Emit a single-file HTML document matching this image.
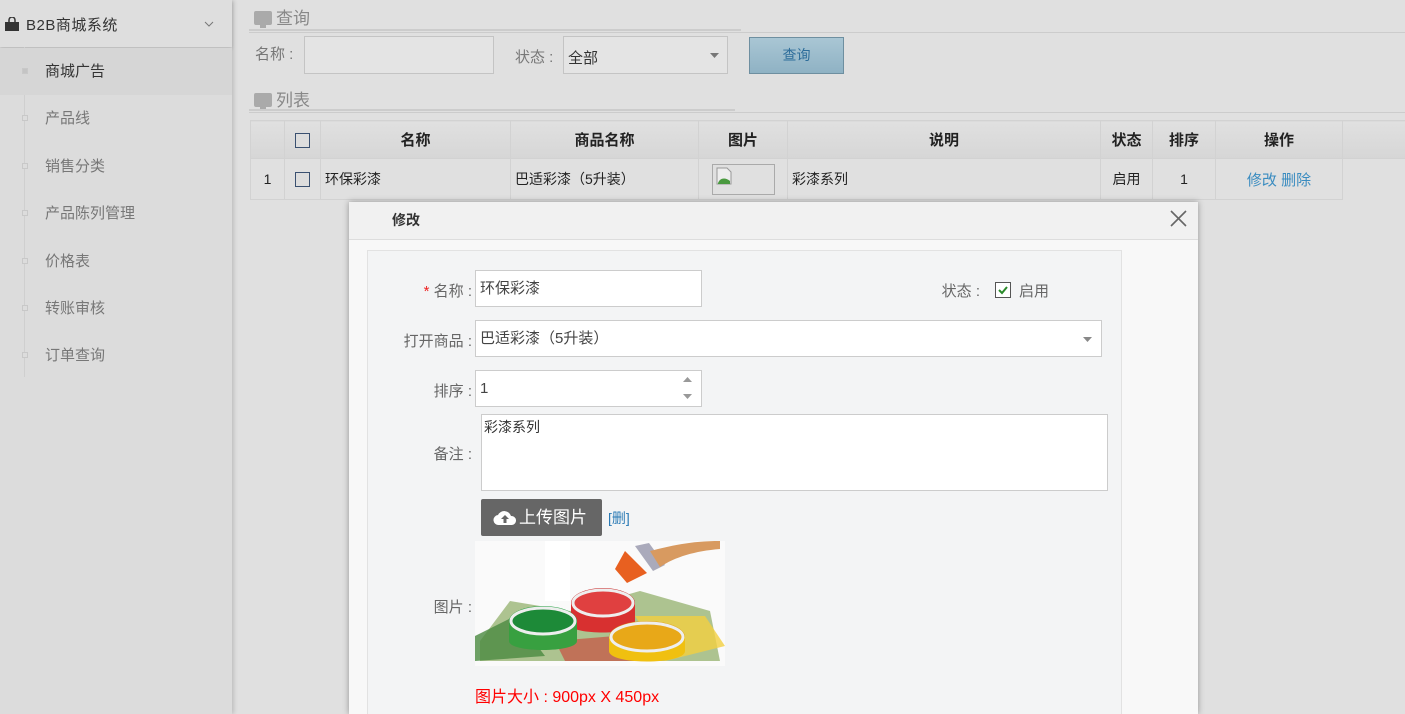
<!DOCTYPE html>
<html><head><meta charset="utf-8"><style>
*{box-sizing:border-box;margin:0;padding:0}
html{width:1405px;height:714px;overflow:hidden}
body{width:1405px;height:714px;overflow:hidden;background:#e0e0e0;font-family:"Liberation Sans","Noto Sans CJK SC",sans-serif;font-size:15px;color:#444;position:relative}
.abs{position:absolute}
#side{left:0;top:0;width:232px;height:714px;background:#dcdcdc;box-shadow:2px 0 4px rgba(0,0,0,.15)}
#side .hd{height:47px;background:#dedede;box-shadow:0 2px 3px rgba(0,0,0,.15);position:relative;font-size:15px;color:#333}
.item{position:absolute;left:0;width:232px;height:47px;line-height:47px;padding-left:45px;color:#777;font-size:15px}
.item.act{background:#d6d6d6;color:#333}
.dot{position:absolute;left:22px;top:20px;width:6px;height:6px;border:1px solid #c8c8c8;background:#dcdcdc}
.act .dot{background:#c4c4c4}
.mon{display:inline-block;width:18px;height:14px;background:#aaa;border-radius:2px;position:relative;vertical-align:-1px;margin-right:4px}
.mon:after{content:"";position:absolute;left:6px;top:14px;width:6px;height:3px;background:#aaa}
.sec{font-size:17px;color:#888}
.box{background:#e4e4e4;border:1px solid #c4c4c4}
table{border-collapse:collapse;position:absolute;left:250px;top:120px;table-layout:fixed;width:1155px}
td{border:1px solid #d2d2d2;text-align:center;font-size:14px;color:#222;overflow:hidden;white-space:nowrap}
tr.h td{height:38px;background:linear-gradient(#e0e0e0,#d6d6d6);font-weight:bold;font-size:15px}
tr.r td{height:41px;background:#e0e0e0}
.cb{display:inline-block;width:15px;height:15px;border:1px solid #3a5070;background:#ddd;vertical-align:middle}
.lab{position:absolute;text-align:right;color:#666;font-size:15px}
.in{position:absolute;background:#fff;border:1px solid #ccc;font-size:15px;color:#444;padding-left:4px}
</style></head><body>
<div id="side" class="abs">
 <div class="hd">
  <svg class="abs" style="left:4px;top:17px" width="16" height="14" viewBox="0 0 16 14"><path d="M5 5V3a3 3 0 0 1 6 0v2" stroke="#333" stroke-width="1.5" fill="none"/><rect x="1" y="5" width="14" height="9" fill="#333"/></svg>
  <span class="abs" style="left:26px;top:14px;letter-spacing:.5px">B2B商城系统</span>
  <svg class="abs" style="left:204px;top:21px" width="10" height="6"><path d="M1 1l4 4 4-4" stroke="#777" fill="none"/></svg>
 </div>
 <div class="abs" style="left:24px;top:47px;width:1px;height:330px;background:#cfcfcf"></div>
 <div class="item act" style="top:48px"><span class="dot"></span>商城广告</div>
 <div class="item" style="top:95px"><span class="dot"></span>产品线</div>
 <div class="item" style="top:143px"><span class="dot"></span>销售分类</div>
 <div class="item" style="top:190px"><span class="dot"></span>产品陈列管理</div>
 <div class="item" style="top:238px"><span class="dot"></span>价格表</div>
 <div class="item" style="top:285px"><span class="dot"></span>转账审核</div>
 <div class="item" style="top:332px"><span class="dot"></span>订单查询</div>
</div>
<div class="abs sec" style="left:254px;top:4px"><span class="mon"></span>查询</div>
<div class="abs" style="left:249px;top:29px;width:492px;height:2px;background:#ccc"></div>
<div class="abs" style="left:249px;top:32px;width:1156px;height:1px;background:#ccc"></div>
<div class="abs" style="left:255px;top:43px;color:#777;font-size:15px">名称 :</div>
<div class="abs box" style="left:304px;top:36px;width:190px;height:38px"></div>
<div class="abs" style="left:515px;top:46px;color:#777;font-size:15px">状态 :</div>
<div class="abs box" style="left:563px;top:36px;width:165px;height:38px;font-size:15px;padding:10px 4px;color:#333">全部<svg class="abs" style="left:146px;top:16px" width="9" height="5"><path d="M0 0h9L4.5 5z" fill="#777"/></svg></div>
<div class="abs" style="left:749px;top:37px;width:95px;height:37px;background:linear-gradient(#a9c6d4,#8fb2c4);border:1px solid #6e8fa0;color:#2d6d9a;font-size:14px;text-align:center;line-height:35px">查询</div>
<div class="abs sec" style="left:254px;top:86px"><span class="mon"></span>列表</div>
<div class="abs" style="left:249px;top:109px;width:486px;height:2px;background:#ccc"></div>
<div class="abs" style="left:249px;top:112px;width:1156px;height:1px;background:#ccc"></div>
<table>
<colgroup><col style="width:34px"><col style="width:36px"><col style="width:190px"><col style="width:188px"><col style="width:89px"><col style="width:313px"><col style="width:52px"><col style="width:63px"><col style="width:127px"><col style="width:63px"></colgroup>
<tr class="h"><td></td><td><span class="cb"></span></td><td>名称</td><td>商品名称</td><td>图片</td><td>说明</td><td>状态</td><td>排序</td><td>操作</td><td style="border-right:none"></td></tr>
<tr class="r"><td>1</td><td><span class="cb"></span></td><td style="text-align:left;padding-left:4px">环保彩漆</td><td style="text-align:left;padding-left:4px">巴适彩漆（5升装）</td><td><div style="width:63px;height:31px;border:1px solid #aaa;margin:auto;position:relative"><svg class="abs" style="left:3px;top:2px" width="16" height="18"><path d="M1 1h10l4 4v12H1z" fill="#eee" stroke="#999"/><path d="M2 16c2-5 7-6 12-2v3H2z" fill="#4a9a40"/></svg></div></td><td style="text-align:left;padding-left:4px">彩漆系列</td><td>启用</td><td>1</td><td style="color:#3a8cc0;font-size:15px">修改 删除</td><td style="border:none;background:#e0e0e0"></td></tr>
</table>
<div class="abs" style="left:349px;top:202px;width:849px;height:512px;background:#f8f8f8;box-shadow:0 0 6px rgba(0,0,0,.35);overflow:hidden">
 <div style="height:38px;background:#f1f1f1;border-bottom:1px solid #ddd;position:relative">
  <span class="abs" style="left:43px;top:8px;font-weight:bold;font-size:14px;color:#333">修改</span>
  <svg class="abs" style="left:821px;top:8px" width="17" height="17"><path d="M1 1l15 15M16 1L1 16" stroke="#666" stroke-width="1.6"/></svg>
 </div>
 <div class="abs" style="left:18px;top:48px;width:755px;height:480px;background:#f3f4f5;border:1px solid #e2e2e2"></div>
</div>
<div class="lab" style="left:380px;top:280px;width:92px"><span style="color:#e22">*</span> 名称 :</div>
<div class="in" style="left:475px;top:270px;width:227px;height:37px;line-height:35px">环保彩漆</div>
<div class="lab" style="left:900px;top:280px;width:80px">状态 :</div>
<div class="abs" style="left:995px;top:282px;width:16px;height:16px;border:1px solid #555;background:#fff"><svg width="14" height="14"><path d="M3 7l3 3 5-6" stroke="#2a8a2a" stroke-width="2" fill="none"/></svg></div>
<div class="abs" style="left:1019px;top:280px;color:#666">启用</div>
<div class="lab" style="left:380px;top:330px;width:92px">打开商品 :</div>
<div class="in" style="left:475px;top:320px;width:627px;height:37px;line-height:35px">巴适彩漆（5升装）<svg class="abs" style="left:607px;top:16px" width="9" height="5"><path d="M0 0h9L4.5 5z" fill="#888"/></svg></div>
<div class="lab" style="left:380px;top:380px;width:92px">排序 :</div>
<div class="in" style="left:475px;top:370px;width:227px;height:37px;line-height:35px">1<svg class="abs" style="left:207px;top:5px" width="9" height="24"><path d="M0 6L4.5 1 9 6zM0 18h9l-4.5 5z" fill="#999"/></svg></div>
<div class="lab" style="left:380px;top:443px;width:92px">备注 :</div>
<div class="in" style="left:481px;top:414px;width:627px;height:77px;padding:2px;font-size:14px;color:#333">彩漆系列</div>
<div class="abs" style="left:481px;top:499px;width:121px;height:37px;background:#666;border-radius:2px;color:#fff;font-size:17px;line-height:37px;padding-left:38px">上传图片<svg class="abs" style="left:12px;top:10px" width="24" height="17" viewBox="0 0 24 17"><path d="M6 16a5 5 0 0 1-1-10 7 7 0 0 1 13 1 4.5 4.5 0 0 1 1 9z" fill="#fff"/><path d="M12 6l-4 4h2.5v4h3v-4H16z" fill="#666"/></svg></div>
<div class="abs" style="left:608px;top:508px;color:#2a7ab5;font-size:14px">[删]</div>
<div class="lab" style="left:380px;top:596px;width:92px">图片 :</div>
<svg class="abs" style="left:475px;top:541px" width="250" height="125" viewBox="0 0 250 125">
<rect width="250" height="125" fill="#fafafa"/><rect x="70" y="0" width="25" height="60" fill="#fff"/>
<path d="M5 100l30-40 60 10 70-20 70 20 10 50H5z" fill="#7a9f4a" opacity=".6"/>
<path d="M160 75l70 0 20 30-60 15z" fill="#f2d040" opacity=".8"/>
<path d="M80 100l60-5 20 25H90z" fill="#c85040" opacity=".7"/>
<path d="M0 95l40-20 30 40-70 5z" fill="#4a8a40" opacity=".8"/>
<ellipse cx="128" cy="62" rx="32" ry="15" fill="#c82020"/><path d="M96 62v22c0 10 64 10 64 0V62" fill="#d83030"/><ellipse cx="128" cy="62" rx="30" ry="13" fill="#e04040" stroke="#eee" stroke-width="3"/>
<ellipse cx="68" cy="80" rx="34" ry="15" fill="#22a040"/><path d="M34 80v20c0 12 68 12 68 0V80" fill="#38a040"/><ellipse cx="68" cy="80" rx="32" ry="13" fill="#1d8a38" stroke="#eee" stroke-width="3"/>
<ellipse cx="172" cy="96" rx="38" ry="16" fill="#e0a010"/><path d="M134 96v14c0 14 76 14 76 0V96" fill="#f0c010"/><ellipse cx="172" cy="96" rx="36" ry="14" fill="#e8a818" stroke="#eee" stroke-width="3"/>
<path d="M150 10l22 22-20 10-12-14z" fill="#e86020"/><path d="M160 5l18 25 12-6-16-22z" fill="#aab"/><path d="M175 10c20-5 40-10 70-10l0 8c-25 2-45 8-60 18z" fill="#d89a60"/>
</svg>
<div class="abs" style="left:475px;top:683px;color:#f00;font-size:16px">图片大小 : 900px X 450px</div>
</body></html>
